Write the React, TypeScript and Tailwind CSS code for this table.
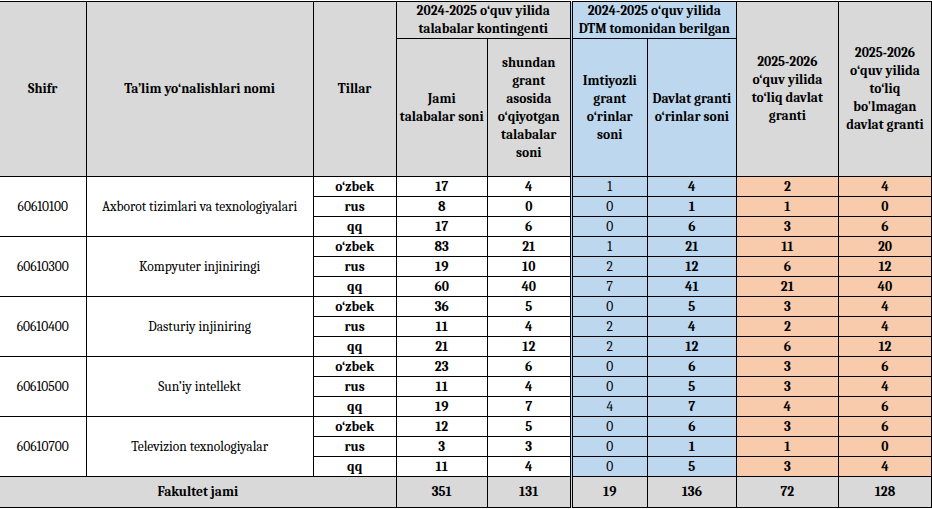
const rows = [
  {
    code: "60610100",
    name: "Axborot tizimlari va texnologiyalari",
    langs: [
      ["o‘zbek", 17, 4, 1, 4, 2, 4],
      ["rus", 8, 0, 0, 1, 1, 0],
      ["qq", 17, 6, 0, 6, 3, 6],
    ],
  },
  {
    code: "60610300",
    name: "Kompyuter injiniringi",
    langs: [
      ["o‘zbek", 83, 21, 1, 21, 11, 20],
      ["rus", 19, 10, 2, 12, 6, 12],
      ["qq", 60, 40, 7, 41, 21, 40],
    ],
  },
  {
    code: "60610400",
    name: "Dasturiy injiniring",
    langs: [
      ["o‘zbek", 36, 5, 0, 5, 3, 4],
      ["rus", 11, 4, 2, 4, 2, 4],
      ["qq", 21, 12, 2, 12, 6, 12],
    ],
  },
  {
    code: "60610500",
    name: "Sun’iy intellekt",
    langs: [
      ["o‘zbek", 23, 6, 0, 6, 3, 6],
      ["rus", 11, 4, 0, 5, 3, 4],
      ["qq", 19, 7, 4, 7, 4, 6],
    ],
  },
  {
    code: "60610700",
    name: "Televizion texnologiyalar",
    langs: [
      ["o‘zbek", 12, 5, 0, 6, 3, 6],
      ["rus", 3, 3, 0, 1, 1, 0],
      ["qq", 11, 4, 0, 5, 3, 4],
    ],
  },
];

const cell = "border border-black p-0 text-center align-middle";
const gray = "bg-[#d9d9d9]";
const blue = "bg-[#bdd7ee]";
const orange = "bg-[#f8cbad]";
const dbl = "border-l-[3px] [border-left-style:double]";

export default function App() {
  return (
    <div className="h-[509px] w-[932px] bg-white pt-px font-serif [font-family:Liberation_Serif,Times_New_Roman,serif] text-[13.5px] leading-[18px] text-black">
      <table className="w-[932px] table-fixed border-collapse">
        <colgroup>
          <col className="w-[86px]" />
          <col className="w-[227px]" />
          <col className="w-[83px]" />
          <col className="w-[91px]" />
          <col className="w-[84px]" />
          <col className="w-[76px]" />
          <col className="w-[89px]" />
          <col className="w-[102px]" />
          <col className="w-[93px]" />
        </colgroup>
        <thead className="font-bold">
          <tr className="h-[37px]">
            <th rowSpan={2} className={`${cell} ${gray} border-l-0`}>Shifr</th>
            <th rowSpan={2} className={`${cell} ${gray}`}>Ta’lim yo‘nalishlari nomi</th>
            <th rowSpan={2} className={`${cell} ${gray}`}>Tillar</th>
            <th colSpan={2} className={`${cell} ${gray}`}>
              2024-2025 o‘quv yilida
              <br />
              talabalar kontingenti
            </th>
            <th colSpan={2} className={`${cell} ${blue} ${dbl}`}>
              2024-2025 o‘quv yilida
              <br />
              DTM tomonidan berilgan
            </th>
            <th rowSpan={2} className={`${cell} ${gray}`}>
              2025-2026
              <br />
              o‘quv yilida
              <br />
              to‘liq davlat
              <br />
              granti
            </th>
            <th rowSpan={2} className={`${cell} ${gray}`}>
              2025-2026
              <br />
              o‘quv yilida
              <br />
              to‘liq
              <br />
              bo'lmagan
              <br />
              davlat granti
            </th>
          </tr>
          <tr className="h-[138px]">
            <th className={`${cell} ${gray}`}>
              Jami
              <br />
              talabalar soni
            </th>
            <th className={`${cell} ${gray}`}>
              shundan
              <br />
              grant
              <br />
              asosida
              <br />
              o‘qiyotgan
              <br />
              talabalar
              <br />
              soni
            </th>
            <th className={`${cell} ${blue} ${dbl}`}>
              Imtiyozli
              <br />
              grant
              <br />
              o‘rinlar
              <br />
              soni
            </th>
            <th className={`${cell} ${blue}`}>
              Davlat granti
              <br />
              o‘rinlar soni
            </th>
          </tr>
        </thead>
        <tbody>
          {rows.map((r) =>
            r.langs.map((l, i) => (
              <tr key={r.code + i} className="h-[20px]">
                {i === 0 && (
                  <>
                    <td rowSpan={3} className={`${cell} border-l-0`}>{r.code}</td>
                    <td rowSpan={3} className={cell}>{r.name}</td>
                  </>
                )}
                <td className={`${cell} font-bold`}>{l[0]}</td>
                <td className={`${cell} font-bold`}>{l[1]}</td>
                <td className={`${cell} font-bold`}>{l[2]}</td>
                <td className={`${cell} ${blue} ${dbl}`}>{l[3]}</td>
                <td className={`${cell} ${blue} font-bold`}>{l[4]}</td>
                <td className={`${cell} ${orange} font-bold`}>{l[5]}</td>
                <td className={`${cell} ${orange} font-bold`}>{l[6]}</td>
              </tr>
            ))
          )}
          <tr className={`h-[31px] font-bold ${gray}`}>
            <td colSpan={3} className={`${cell} border-l-0`}>Fakultet jami</td>
            <td className={cell}>351</td>
            <td className={cell}>131</td>
            <td className={`${cell} ${dbl}`}>19</td>
            <td className={cell}>136</td>
            <td className={cell}>72</td>
            <td className={cell}>128</td>
          </tr>
        </tbody>
      </table>
    </div>
  );
}
